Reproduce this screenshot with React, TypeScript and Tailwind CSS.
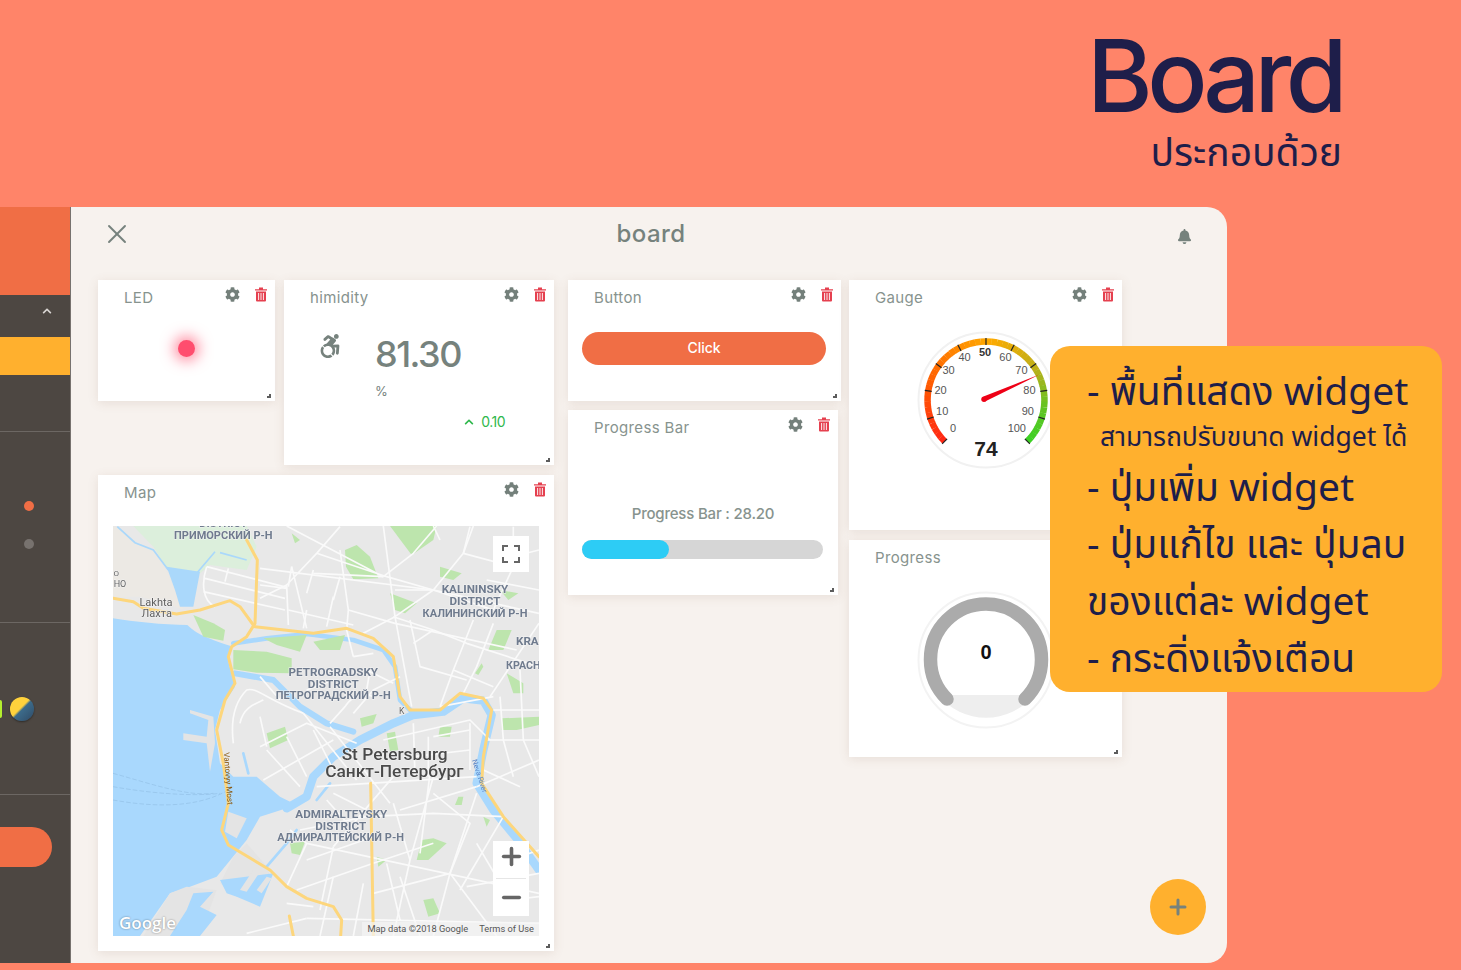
import React from "react";
import { X, Plus, Minus } from "lucide-react";
import { FaAccessibleIcon, FaBell, FaChevronUp, FaCog } from "react-icons/fa";

const thai = "font-['Noto_Sans_Thai','Noto_Sans','Open_Sans',sans-serif]";

const TrashIcon = () => (
  <svg viewBox="0 0 14 15" className="w-[14px] h-[15px]">
    <path d="M1 2.2h12v1.4H1zM5 .6h4v1.6H5z" fill="#e5404f" />
    <path d="M2 4.4h10v9.2a1 1 0 0 1-1 1H3a1 1 0 0 1-1-1z" fill="#e5404f" />
    <path d="M4.6 6v7M7 6v7M9.4 6v7" stroke="#fff" strokeWidth="0.9" />
  </svg>
);

const Widget = ({
  title,
  className,
  tools = true,
  children,
}: {
  title: string;
  className: string;
  tools?: boolean;
  children?: React.ReactNode;
}) => (
  <div className={`relative shrink-0 bg-white shadow-[0_2px_10px_rgba(130,90,70,0.13)] ${className}`}>
    <div className="flex items-start justify-between pl-[26px] pr-[7px] pt-[7px] h-[36px]">
      <span className="font-['Inter',sans-serif] text-[15px] leading-[22px] tracking-[0.35px] text-[#87938e]">{title}</span>
      {tools && (
        <div className="flex items-center gap-[14px] text-[#74807b]">
          <FaCog className="w-[15px] h-[15px]" />
          <TrashIcon />
        </div>
      )}
    </div>
    {children}
    <div className="absolute right-[4px] bottom-[3px] w-[4px] h-[4px] border-r-2 border-b-2 border-[#5c5c5c]" />
  </div>
);

const lerp = (a: number[], b: number[], t: number) => a.map((v, i) => Math.round(v + (b[i] - v) * t));

const gaugeStops: [number, number[]][] = [
  [0, [255, 40, 20]],
  [25, [255, 100, 0]],
  [50, [255, 170, 0]],
  [70, [190, 175, 25]],
  [85, [100, 195, 35]],
  [100, [55, 210, 35]],
];

const gaugeColor = (v: number) => {
  for (let i = 0; i < gaugeStops.length - 1; i++) {
    const [a, ca] = gaugeStops[i];
    const [b, cb] = gaugeStops[i + 1];
    if (v <= b) return `rgb(${lerp(ca, cb, (v - a) / (b - a)).join(",")})`;
  }
  return "rgb(55,210,35)";
};

const polar = (r: number, v: number) => {
  const deg = 135 + v * 2.7;
  const rad = (deg * Math.PI) / 180;
  return [70 + r * Math.cos(rad), 70 + r * Math.sin(rad)];
};

const Gauge = () => {
  const segs = Array.from({ length: 50 }, (_, i) => i * 2);
  const ticks = Array.from({ length: 11 }, (_, i) => i * 10);
  return (
    <svg viewBox="0 0 140 140" className="w-[140px] h-[140px]">
      <circle cx="70" cy="70" r="67.5" fill="#fff" stroke="#f1f1f1" strokeWidth="2" />
      {segs.map((v) => {
        const [x1, y1] = polar(58.5, v);
        const [x2, y2] = polar(58.5, v + 2.1);
        return <line key={v} x1={x1} y1={y1} x2={x2} y2={y2} stroke={gaugeColor(v)} strokeWidth="6.5" />;
      })}
      {ticks.map((v) => {
        const [x1, y1] = polar(55, v);
        const [x2, y2] = polar(62, v);
        const [tx, ty] = polar(45, v);
        return (
          <g key={v}>
            <line x1={x1} y1={y1} x2={x2} y2={y2} stroke="#222" strokeWidth="1.2" />
            <text
              x={tx - 1}
              y={ty + 0.6}
              textAnchor="middle"
              fontFamily="Liberation Sans"
              fontSize="11"
              fontWeight={v === 50 ? 700 : 400}
              fill={v === 50 ? "#333" : "#555"}
            >
              {v}
            </text>
          </g>
        );
      })}
      <path d="M123.5 44.5 L67.5 66.5 L69 71.5 Z" fill="#ee0016" />
      <circle cx="68" cy="69.2" r="2.7" fill="#ee0016" />
      <text x="70" y="126" textAnchor="middle" fontFamily="Liberation Sans" fontWeight="700" fontSize="21" fill="#222">
        74
      </text>
    </svg>
  );
};

const ProgressDial = () => (
  <svg viewBox="0 0 140 140" className="w-[140px] h-[140px]">
    <circle cx="70" cy="70" r="67.5" fill="#fff" stroke="#f3f3f3" strokeWidth="2" />
    <path d="M22 105 H118 A62 62 0 0 1 22 105 Z" fill="#eeeeee" />
    <path d="M31 109 A55.5 55.5 0 1 1 109 109" fill="none" stroke="#ababab" strokeWidth="13.5" strokeLinecap="round" />
    <text x="70" y="69" textAnchor="middle" fontFamily="Liberation Sans" fontWeight="700" fontSize="20" fill="#111">
      0
    </text>
  </svg>
);

const thinRoads = [
  "M320 170 L560 232 M315 205 L555 265 M310 245 L555 300 M385 175 L375 215 M320 170 C305 215 305 270 345 290",
  "M480 175 L1000 240 M480 265 L560 225 L650 130 L720 50 M560 225 L565 345 M575 170 L620 355",
  "M650 130 L860 200 L1000 240 L1317 310 M560 48 L850 200 M720 120 L745 300 L740 360 M850 200 L940 130 L1010 48",
  "M850 48 L885 320 L935 590 M1000 240 L885 320 L790 370 M745 300 L885 340 L1250 420 M1000 240 L1090 130 L1110 50",
  "M1120 330 L1060 480 L1020 590 M1180 340 L1130 470 L1090 550 M1000 360 L1100 400 L1317 470 M1317 340 L1230 470 L1170 560",
  "M1180 600 L1317 600 M1200 560 L1210 690 M1160 690 L1317 690 M1260 480 L1270 690",
  "M400 700 C390 620 410 570 440 540 C470 530 500 570 610 610 M420 640 C430 590 470 580 490 570",
  "M480 710 L620 640 L770 700 M490 810 L700 690 M610 610 L770 810 M600 830 L500 720",
  "M690 650 L870 880 M760 610 L820 540 L900 500 M810 480 L800 540 M690 640 L735 590 C760 550 800 550 820 560",
  "M850 690 L1110 630 L1170 690 M940 640 L945 800 M985 680 L985 800 M1110 640 L1110 780 M1130 830 L1317 750",
  "M650 830 L1130 800 M900 900 L1130 830 M600 960 L800 920 L1000 910 L1210 920",
  "M1000 800 L930 1050 L880 1278 M1130 850 L1050 1090 L1000 1278 M990 790 L960 1030 M880 800 L700 1010",
  "M570 960 L620 1000 L1317 1150 M620 1000 L560 1130 M700 1010 L660 1200 M1050 1090 L1190 1278 M1210 920 L1080 1140",
  "M590 1140 L820 1060 M820 1150 L1050 1090 M620 1225 L1317 1240 M860 1060 L900 1230 M1100 1130 L1317 1090",
  "M1000 48 L1020 90 M1200 150 L1317 120 M1160 210 L1317 240 M880 320 L1000 360",
  "M480 225 L560 235 M575 170 L565 230 M640 180 L620 250 M720 200 L700 270 M640 190 L850 200",
  "M565 300 L760 345 M620 300 L610 355 M700 260 L680 350",
  "M885 240 L1000 240 M1000 240 L1180 300 M1090 130 L1240 170 L1180 300 M1240 50 L1240 170 M1120 48 L1090 130",
  "M940 400 L1000 360 M930 330 L960 470 L1100 510 M1020 590 L1180 560 M1060 480 L1180 530",
  "M760 440 L820 430 M760 440 L740 360 M800 480 L880 520 M480 500 L540 570 M620 540 L700 510",
  "M500 710 L480 620 M560 680 L620 800 M640 660 L700 780",
  "M1000 680 L1110 660 M940 740 L1110 720 M1150 780 L1260 830 M1210 690 L1240 800 M1270 690 L1317 800",
  "M700 850 L800 900 M680 870 L760 960 M880 880 L930 1050 M1000 850 L1110 940 L1050 1090",
  "M620 1050 L820 980 M820 1060 L1000 1000 M700 1100 L660 1278 M790 1120 L760 1278 M900 1100 L960 1278",
  "M1130 1000 L1230 1170 M1200 1060 L1317 1020 M1230 1170 L1317 1160 M560 1180 L640 1190 M440 1270 L620 1225",
];

const greens = [
  "M870 48 H1010 L1000 90 L935 135 Z",
  "M735 120 L770 105 L810 140 L835 205 L760 208 L738 170 Z",
  "M870 250 L950 280 L915 310 L885 300 Z",
  "M400 420 L500 425 L575 445 L575 490 L470 488 L400 478 Z",
  "M490 385 L620 375 L600 425 L530 405 Z",
  "M640 395 L735 375 L720 420 L660 420 Z",
  "M280 315 L340 340 L375 360 L370 392 L310 380 Z",
  "M500 670 L555 650 L565 690 L510 715 Z",
  "M780 625 L830 612 L820 640 L785 650 Z",
  "M1020 170 L1085 190 L1060 210 L1020 200 Z",
  "M1200 240 L1255 250 L1225 270 Z",
  "M1190 360 L1235 360 L1210 420 L1165 420 Z",
  "M1220 490 L1270 520 L1270 550 L1240 550 Z",
  "M1205 625 L1317 620 L1317 645 L1250 660 L1205 660 Z",
  "M1020 650 L1055 650 L1050 680 L1015 680 Z",
  "M860 670 L885 665 L895 720 L870 725 Z",
  "M965 990 L1000 985 L1040 1000 L985 1050 L950 1050 Z",
  "M570 1000 L615 995 L600 1035 L575 1030 Z",
  "M1150 920 L1170 930 L1160 950 Z",
  "M830 1040 L860 1050 L835 1070 Z",
  "M1075 860 L1090 860 L1085 885 L1065 885 Z",
  "M970 1170 L1000 1165 L1020 1210 L985 1220 Z",
  "M575 70 L600 90 L585 100 Z",
  "M1125 490 L1145 460 L1150 470 L1135 495 Z",
];

const mapLabels: [string, number, number, number, string, number][] = [
  ["DISTRICT", 370, 52, 33, "#6f7b8e", 700],
  ["ПРИМОРСКИЙ Р-Н", 370, 86, 33, "#6f7b8e", 700],
  ["KALININSKY", 1125, 249, 35, "#6f7b8e", 700],
  ["DISTRICT", 1125, 285, 35, "#6f7b8e", 700],
  ["КАЛИНИНСКИЙ Р-Н", 1125, 320, 33, "#6f7b8e", 700],
  ["KRA", 1282, 406, 35, "#6f7b8e", 700],
  ["КРАСН", 1270, 476, 32, "#6f7b8e", 700],
  ["PETROGRADSKY", 700, 499, 35, "#6f7b8e", 700],
  ["DISTRICT", 700, 535, 35, "#6f7b8e", 700],
  ["ПЕТРОГРАДСКИЙ Р-Н", 700, 568, 33, "#6f7b8e", 700],
  ["ADMIRALTEYSKY", 724, 923, 35, "#6f7b8e", 700],
  ["DISTRICT", 722, 959, 35, "#6f7b8e", 700],
  ["АДМИРАЛТЕЙСКИЙ Р-Н", 722, 992, 33, "#6f7b8e", 700],
  ["Lakhta", 168, 288, 33, "#5e5e5e", 400],
  ["Лахта", 170, 321, 33, "#5e5e5e", 400],
  ["St Petersburg", 884, 750, 52, "#4a4a4a", 500],
  ["Санкт-Петербург", 883, 802, 52, "#4a4a4a", 500],
  ["О", 49, 197, 24, "#666", 400],
  ["НО", 60, 230, 27, "#666", 400],
  ["K", 905, 612, 26, "#666", 400],
];

const MapArt = () => (
  <svg viewBox="39 48 1278 1230" className="absolute inset-0 w-full h-full blur-[0.35px]">
    <rect x="39" y="48" width="1278" height="1230" fill="#e8e8e8" />
    {/* top left wetlands */}
    <path d="M39 48 H440 L470 110 L440 180 L330 165 L300 190 L210 190 L160 110 L100 48 Z" fill="#dcefdc" />
    <path d="M39 70 L39 260 L120 260 L200 280 L250 300 L205 190 L160 120 L105 100 L60 55 L39 48 Z" fill="#ece9e4" />
    <path d="M52 50 L105 98 L160 120 L205 180 M360 128 L440 150 M290 190 L345 125" fill="none" stroke="#aad8fb" strokeWidth="5" />
    <path d="M200 170 L300 185 L280 290 L240 290 L225 240 Z" fill="#aad8fb" />
    {/* bay */}
    <path
      d="M39 325 C100 335 190 345 262 345 C290 375 350 395 392 408 L385 455 L405 530 L360 600 L345 660 L360 760 L400 800 L470 800 L540 860 L590 885 L480 920 L440 990 L350 1100 L270 1130 L210 1150 L120 1278 L39 1278 Z"
      fill="#a9d8fd"
    />
    {/* piers and port */}
    <path d="M270 600 L340 620 L345 700 L330 785 L320 700 L250 690 L250 670 L320 680 L325 630 L270 610 Z" fill="#e4e4e4" />
    <path d="M385 905 L440 925 L410 985 L375 965 Z" fill="#e4e4e4" />
    <path d="M440 1000 L510 1080 L500 1120 L410 1160 L360 1120 L400 1040 Z" fill="#e4e4e4" />
    <path d="M210 1150 L260 1130 L350 1140 L300 1278 L130 1278 Z" fill="#e4e4e4" />
    <path d="M280 1150 L340 1145 L300 1190 L350 1215 L300 1278 L210 1278 L260 1200 Z" fill="#a9d8fd" />
    <path d="M360 1110 L520 1090 L480 1190 L410 1160 L380 1150 Z" fill="#a9d8fd" />
    <path d="M420 1140 L460 1080 L480 1085 L440 1145 M470 1140 L500 1100 L515 1105 L485 1150" fill="#e4e4e4" />
    {/* shipping lanes */}
    <path d="M39 790 C150 820 260 860 340 850 M39 830 C150 850 280 860 360 850 M39 870 C150 890 300 900 400 830" fill="none" stroke="#93bfe6" strokeWidth="2" strokeDasharray="14 6" />
    {/* neva */}
    <g fill="none" stroke="#a9d8fd" strokeLinecap="round" strokeLinejoin="round">
      <path d="M560 895 L620 860 L640 800 L700 740 L780 690 L880 640 L940 615 L1030 605 L1090 565 L1150 572 L1175 615 L1150 720 L1130 820 L1180 900 L1250 985 L1317 1080" strokeWidth="25" />
      <path d="M400 400 L500 385 L620 372 L760 390 L850 420 L885 470 L900 570 L940 610" strokeWidth="14" />
      <path d="M405 490 L520 510 L600 590 L680 640 L760 665" strokeWidth="18" />
      <path d="M500 1070 L560 1000 L590 960 M690 820 L650 870 M430 730 L445 790" strokeWidth="8" />
    </g>
    {greens.map((d) => (
      <path key={d} d={d} fill="#bde5ad" />
    ))}
    <g fill="none" stroke="#fafafa" strokeWidth="5" strokeLinejoin="round">
      {thinRoads.map((d) => (
        <path key={d} d={d} />
      ))}
    </g>
    <g fill="none" stroke="#fdd67c" strokeWidth="9" strokeLinecap="round" strokeLinejoin="round">
      <path d="M440 90 L472 150 L465 340 L440 380 L395 410 L385 440 L405 520 L375 570 L350 660 L370 760 L385 880 L365 960 L385 1005 L510 1080 L560 1130 L620 1165 L700 1190 L725 1230 L722 1278" />
      <path d="M39 265 L100 275 L130 295 L230 312 L300 300 L390 272 L420 290 L460 345" />
      <path d="M465 350 L640 370 L740 355 L820 385 L880 440 L900 560 L930 600 L1020 600 L1080 550 L1150 565 L1175 600 L1150 740 L1145 820 L1210 920 L1317 1040" />
      <path d="M812 820 L820 1278 M568 1218 L580 1278" />
    </g>
    {mapLabels.map(([t, x, y, s, c, w]) => (
      <text
        key={t + x}
        x={x}
        y={y}
        textAnchor="middle"
        fontFamily="Roboto"
        fontSize={s}
        fontWeight={w}
        fill={c}
        stroke="#f2f2f2"
        strokeWidth="3"
        paintOrder="stroke"
      >
        {t}
      </text>
    ))}
    <text x="377" y="806" transform="rotate(86 377 806)" textAnchor="middle" fontFamily="Roboto" fontSize="24" fill="#8a5a14">
      Vantovyy Most
    </text>
    <text x="1132" y="800" transform="rotate(72 1132 800)" textAnchor="middle" fontFamily="Roboto" fontSize="22" fill="#5a86c8">
      Neva River
    </text>
  </svg>
);

const Sidebar = () => (
  <aside className="w-[71px] shrink-0 flex flex-col bg-[#4d4742] border-r border-[#77726e]">
    <div className="h-[88px] bg-[#f06e45]" />
    <div className="h-[42px] flex items-center justify-end pr-[18px] pb-[10px] text-[#d9d5d2]">
      <FaChevronUp className="w-[10px] h-[10px]" />
    </div>
    <div className="h-[38px] bg-[#ffb02e]" />
    <div className="h-[57px] border-b border-[#6c6763]" />
    <div className="h-[191px] flex flex-col items-end pr-[36px] pt-[69px] gap-[28px] border-b border-[#6c6763]">
      <div className="w-[10px] h-[10px] rounded-full bg-[#f06e45]" />
      <div className="w-[10px] h-[10px] rounded-full bg-[#77726e]" />
    </div>
    <div className="h-[172px] flex items-center justify-end gap-[8px] pr-[36px] border-b border-[#6c6763]">
      <div className="w-[2px] h-[18px] rounded-r-full bg-[#b5f02e]" />
      <div className="w-[24px] h-[24px] rounded-full shadow-[0_1px_2px_rgba(0,0,0,0.4)] bg-[linear-gradient(135deg,#ffd23c_45%,#3c6b8a_52%,#2f4a66)]" />
    </div>
    <div className="pt-[32px]">
      <div className="w-[52px] h-[40px] rounded-r-[20px] bg-[#f06e45]" />
    </div>
  </aside>
);

export default function App() {
  return (
    <div className="relative w-[1461px] h-[970px] overflow-hidden bg-[#ff8469] text-[#1e1e4a]">
      <header className="h-[207px] flex flex-col items-end pr-[119px] pt-[17px]">
        <h1 className="font-['Inter',sans-serif] text-[100px] leading-[117px] font-medium tracking-[-5.5px]">Board</h1>
        <p className={`${thai} text-[39px] leading-[42px]`}>ประกอบด้วย</p>
      </header>

      <div className="w-[1227px] h-[756px] flex overflow-hidden rounded-r-[20px] bg-[#f7f2ee]">
        <Sidebar />
        <main className="relative flex-1 flex flex-col">
          <div className="h-[73px] shrink-0 flex items-center justify-between pl-[30px] pr-[26px] pb-[20px] text-[#76827d]">
            <X className="w-[32px] h-[32px]" strokeWidth={1.4} />
            <span className="font-['Inter',sans-serif] text-[24px] font-medium tracking-[0.4px]">board</span>
            <div className="w-[32px] flex justify-center">
              <FaBell className="w-[15px] h-[15px] mt-[5px]" />
            </div>
          </div>

          <div className="flex items-start pl-[27px]">
            <div className="w-[456px] shrink-0 flex flex-col gap-[10px]">
              <div className="flex items-start gap-[9px]">
                <Widget title="LED" className="w-[177px] h-[121px]">
                  <div className="flex justify-center pt-[24px]">
                    <div className="w-[17px] h-[17px] rounded-full bg-[#ff4d6e] shadow-[0_0_14px_4px_rgba(255,50,85,0.55)]" />
                  </div>
                </Widget>
                <Widget title="himidity" className="w-[270px] h-[185px]">
                  <div className="flex items-start pl-[35px] pt-[18px] text-[#76827d]">
                    <FaAccessibleIcon className="w-[22px] h-[24px]" />
                    <div className="pl-[34px] flex flex-col">
                      <span className="font-['Inter',sans-serif] text-[36px] leading-[44px] font-medium tracking-[-1.5px] mt-[-2px]">81.30</span>
                      <span className="font-['Inter',sans-serif] text-[13px] leading-[16px] mt-[7px]">%</span>
                    </div>
                  </div>
                  <div className="flex items-center justify-end gap-[7px] pr-[49px] pt-[13px] text-[#2fb84c]">
                    <FaChevronUp className="w-[10px] h-[10px]" />
                    <span className="font-['Inter',sans-serif] text-[14px] leading-[20px] tracking-[-0.5px]">0.10</span>
                  </div>
                </Widget>
              </div>
              <Widget title="Map" className="w-[456px] h-[476px]">
                <div className="px-[15px] pt-[15px]">
                  <div className="relative w-[426px] h-[410px] overflow-hidden">
                    <MapArt />
                    <div className="absolute right-[10px] top-[10px] w-[36px] h-[36px] bg-white flex items-center justify-center">
                      <svg viewBox="0 0 18 18" className="w-[18px] h-[18px]" fill="none" stroke="#666" strokeWidth="2">
                        <path d="M1 6V1h5M12 1h5v5M17 12v5h-5M6 17H1v-5" />
                      </svg>
                    </div>
                    <div className="absolute right-[10px] bottom-[20px] w-[36px] h-[75px] bg-white flex flex-col items-center text-[#666]">
                      <div className="h-[37px] pb-[6px] flex items-center"><Plus className="w-[27px] h-[27px]" strokeWidth={3.2} /></div>
                      <div className="w-[30px] h-px bg-[#e6e6e6]" />
                      <div className="h-[37px] flex items-center"><Minus className="w-[27px] h-[27px]" strokeWidth={3} /></div>
                    </div>
                    <span className="absolute left-[6px] bottom-[2px] font-['Open_Sans',sans-serif] text-[17px] leading-[22px] font-semibold text-white [text-shadow:0_0_2px_rgba(0,0,0,0.45)]">Google</span>
                    <div className="absolute right-0 bottom-0 flex gap-[11px] px-[5px] h-[14px] items-center bg-[rgba(245,245,245,0.7)] font-['Roboto',sans-serif] text-[9.25px] text-[#555]">
                      <span>Map data ©2018 Google</span>
                      <span>Terms of Use</span>
                    </div>
                  </div>
                </div>
              </Widget>
            </div>

            <div className="ml-[14px] w-[273px] shrink-0 flex flex-col items-start gap-[9px]">
              <Widget title="Button" className="w-[273px] h-[121px]">
                <div className="pl-[14px] pr-[15px] pt-[16px]">
                  <div className="h-[33px] pb-[3px] rounded-full bg-[#f06e45] flex items-center justify-center font-['Inter',sans-serif] text-[14px] font-medium text-white">Click</div>
                </div>
              </Widget>
              <Widget title="Progress Bar" className="w-[270px] h-[185px]">
                <p className="pt-[56px] text-center font-['Inter',sans-serif] text-[15px] leading-[24px] font-medium tracking-[-0.2px] text-[#87938e]">Progress Bar : 28.20</p>
                <div className="mx-[14px] mt-[14px] w-[241px] h-[19px] rounded-full bg-[#d6d6d6]">
                  <div className="w-[87px] h-full rounded-full bg-[#2dccf5]" />
                </div>
              </Widget>
            </div>

            <div className="ml-[8px] w-[273px] shrink-0 flex flex-col gap-[10px]">
              <Widget title="Gauge" className="w-[273px] h-[250px]">
                <div className="flex justify-center pt-[14px]"><Gauge /></div>
              </Widget>
              <Widget title="Progress" tools={false} className="w-[273px] h-[217px]">
                <div className="flex justify-center pt-[14px]"><ProgressDial /></div>
              </Widget>
            </div>
          </div>

          <div className="absolute right-[21px] bottom-[28px] w-[56px] h-[56px] rounded-full bg-[#ffb02e] flex items-center justify-center text-[#76827d]">
            <Plus className="w-[24px] h-[24px]" strokeWidth={3} />
          </div>
        </main>
      </div>

      <div className={`absolute left-[1050px] top-[346px] w-[392px] h-[346px] rounded-[20px] bg-[#ffb02e] pl-[37px] pt-[19px] ${thai} text-[39px] leading-[57px] text-[#1e1e4a]`}>
        <p className="leading-[58px]">- พื้นที่แสดง widget</p>
        <p className="pl-[13px] text-[26.5px] leading-[30px]">สามารถปรับขนาด widget ได้</p>
        <p className="mt-[8px]">- ปุ่มเพิ่ม widget</p>
        <p>- ปุ่มแก้ไข และ ปุ่มลบ</p>
        <p>ของแต่ละ widget</p>
        <p>- กระดิ่งแจ้งเตือน</p>
      </div>
    </div>
  );
}
